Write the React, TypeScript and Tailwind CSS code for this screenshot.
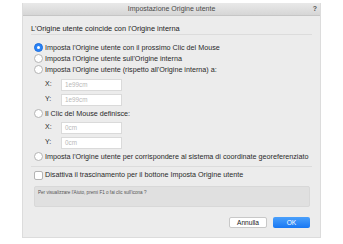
import React from "react";

const font = { fontFamily: '"Liberation Sans", Arial, sans-serif' };

function Radio({ checked, label }: { checked?: boolean; label: string }) {
  return (
    <div className="flex items-center h-[11px] pl-[11px] gap-[2px]">
      {checked ? (
        <span className="w-[9px] h-[9px] rounded-full bg-[#2a83f6] border border-[#1d6fe0] flex items-center justify-center">
          <span className="w-[3px] h-[3px] rounded-full bg-white" />
        </span>
      ) : (
        <span className="w-[9px] h-[9px] rounded-full bg-white border border-[#b4b4b4]" />
      )}
      <span className="text-[7.2px] leading-[11px] text-[#2a2a2a] whitespace-nowrap">{label}</span>
    </div>
  );
}

function Field({ label, value }: { label: string; value: string }) {
  return (
    <div className="flex items-center h-[15px] pl-[22px]">
      <span className="w-[16px] text-[7px] text-[#2a2a2a]">{label}</span>
      <div className="w-[61px] h-[12px] bg-white border border-[#dadada] flex items-center pl-[3px]">
        <span className="text-[6.3px] text-[#b8b8b8]">{value}</span>
      </div>
    </div>
  );
}

export default function App() {
  return (
    <div className="w-[343px] h-[244px] bg-white pt-[3px]" style={font}>
      <div className="ml-[22px] w-[299px] h-[235px] bg-[#ececec] border-x border-b border-[#dcdcdc] flex flex-col">
        <div className="h-[13px] bg-gradient-to-b from-[#e9e9e9] to-[#d6d6d6] border-b border-[#c6c6c6] flex items-center relative">
          <span className="w-full text-center text-[7px] text-[#4a4a4a]">Impostazione Origine utente</span>
          <span className="absolute right-[3px] top-[1px] text-[7px] font-bold text-[#555]">?</span>
        </div>
        <div className="mt-[8px] h-[10px] pl-[8px] text-[7.4px] leading-[10px] text-[#222]">
          L'Origine utente coincide con l'Origine interna
        </div>
        <div className="mx-[8px] mt-[0px] h-px bg-[#dcdcdc]" />
        <div className="mt-[7px]">
          <Radio checked label="Imposta l'Origine utente con il prossimo Clic del Mouse" />
          <Radio label="Imposta l'Origine utente sull'Origine interna" />
          <Radio label="Imposta l'Origine utente (rispetto all'Origine interna) a:" />
        </div>
        <div className="mt-[2px]">
          <Field label="X:" value="1e99cm" />
          <Field label="Y:" value="1e99cm" />
        </div>
        <div className="mt-[1px]">
          <Radio label="Il Clic del Mouse definisce:" />
        </div>
        <div className="mt-[1px]">
          <Field label="X:" value="0cm" />
          <Field label="Y:" value="0cm" />
        </div>
        <div className="mt-[1px]">
          <Radio label="Imposta l'Origine utente per corrispondere al sistema di coordinate georeferenziato" />
        </div>
        <div className="mx-[8px] mt-[4px] h-px bg-[#dcdcdc]" />
        <div className="mt-[3px] flex items-center h-[11px] pl-[11px] gap-[2px]">
          <span className="w-[9px] h-[9px] rounded-[2px] bg-white border border-[#b4b4b4]" />
          <span className="text-[7.2px] text-[#2a2a2a] whitespace-nowrap">
            Disattiva il trascinamento per il bottone Imposta Origine utente
          </span>
        </div>
        <div className="mt-[5px] mx-[11px] mr-[10px] h-[21px] bg-[#e0e0e0] border border-[#d8d8d8] rounded-[2px] px-[3px] pt-[3px]">
          <span className="block text-[4.6px] leading-[6px] text-[#555]">
            Per visualizzare l'Aiuto, premi F1 o fai clic sull'icona ?
          </span>
        </div>
        <div className="mt-[10px] mr-[10px] flex justify-end gap-[6px]">
          <button className="w-[38px] h-[11px] bg-white border border-[#c8c8c8] rounded-[2px] text-[6.6px] leading-[9px] text-[#222]">
            Annulla
          </button>
          <button className="w-[37px] h-[11px] bg-gradient-to-b from-[#4aa0fb] to-[#1677f3] rounded-[2px] text-[6.6px] leading-[11px] text-white">
            OK
          </button>
        </div>
      </div>
    </div>
  );
}
